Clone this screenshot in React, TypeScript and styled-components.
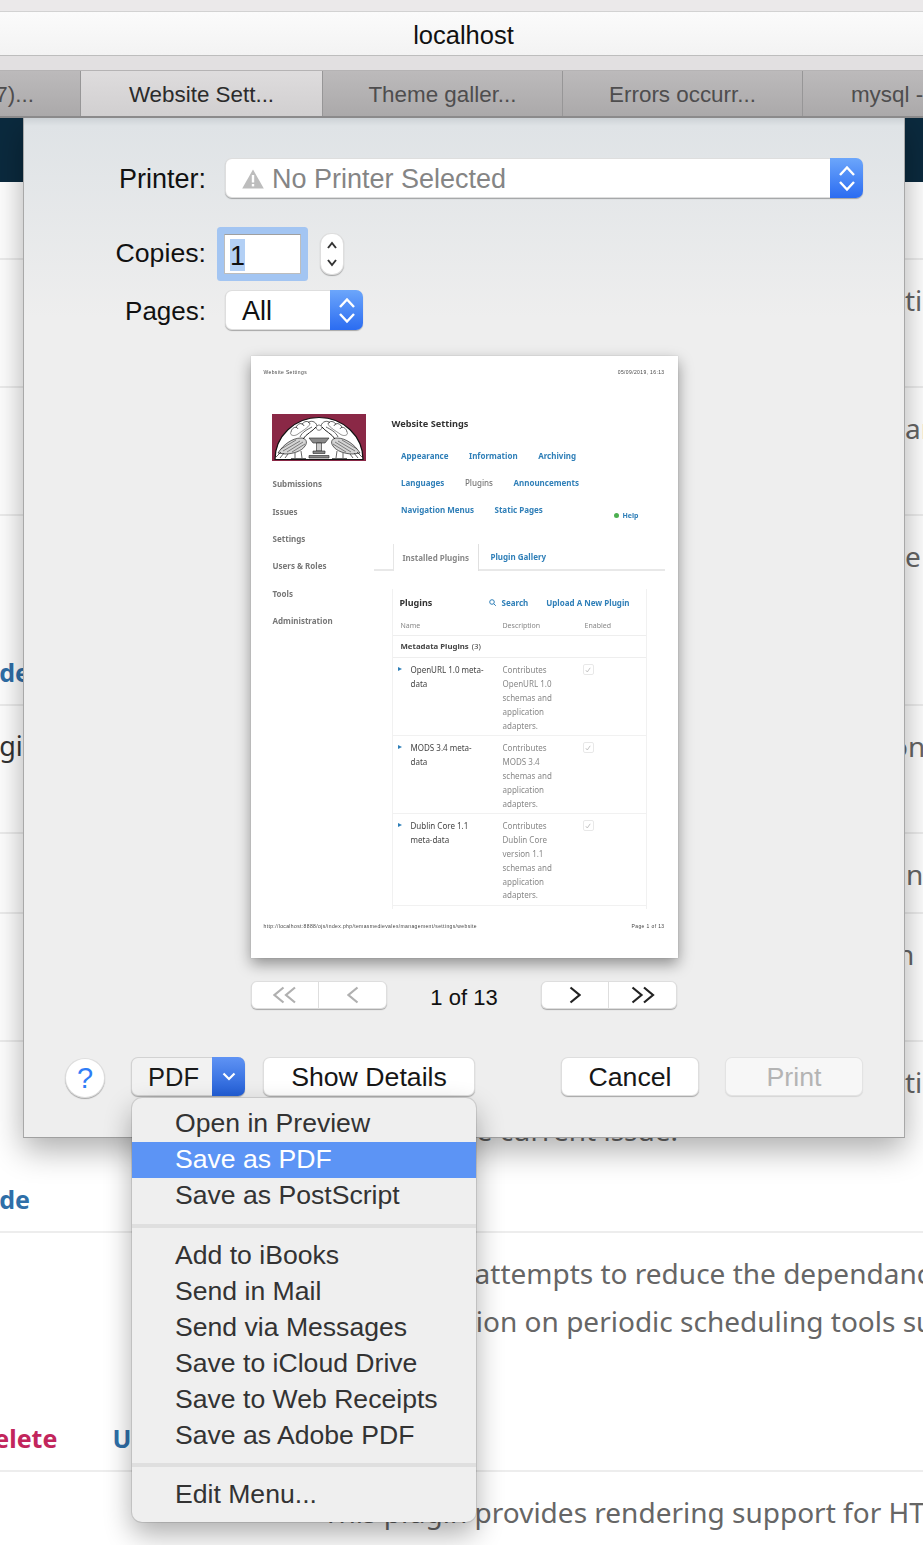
import React from "react";
import styled, { createGlobalStyle } from "styled-components";

const Global = createGlobalStyle`
  html, body { margin: 0; padding: 0; background: #fff; }
  #root { width: 923px; height: 1545px; }
`;

const SANS = `"Liberation Sans", Arial, sans-serif`;
const NOTO = `"Noto Sans", "Open Sans", sans-serif`;
const RING = "inset 0 0 0 1px rgba(0,0,0,.13), 0 1px 1px rgba(0,0,0,.3)";

const Screen = styled.div`
  width: 923px;
  height: 1545px;
  overflow: hidden;
  display: flex;
  flex-direction: column;
  font-family: ${SANS};
  background: #fff;
`;

const TopStrip = styled.div`
  height: 11px;
  background: #ebe9ea;
  border-bottom: 1px solid #d2d2d2;
`;

const AddressBar = styled.div`
  height: 44px;
  box-sizing: border-box;
  padding: 3px 0 0 4px;
  display: flex;
  align-items: center;
  justify-content: center;
  background: linear-gradient(#fbfbfb, #f3f3f3);
  border-bottom: 1px solid #bdbdbd;
  font-size: 25.5px;
  color: #111;
`;

const ChromeGap = styled.div`
  height: 14px;
  background: #e2e0e1;
`;

const TabBar = styled.div`
  height: 48px;
  box-sizing: border-box;
  display: flex;
  margin-left: -159px;
  border-top: 1px solid #b5b3b4;
  border-bottom: 2px solid #8b8a8b;
  background: #b6b4b5;
`;

const Tab = styled.div<{ $active?: boolean; $shift?: number }>`
  flex: 0 0 ${(p) => (p.$active ? 242 : 240)}px;
  box-sizing: border-box;
  display: flex;
  align-items: center;
  justify-content: center;
  padding: 2px 0 0 ${(p) => p.$shift ?? 0}px;
  white-space: nowrap;
  font-size: 22.4px;
  color: ${(p) => (p.$active ? "#2b2b2b" : "#4e4d4e")};
  border-right: 1px solid #979697;
  background: ${(p) =>
    p.$active
      ? "linear-gradient(#dedcdd, #d1cfd0)"
      : "linear-gradient(#bcbabb, #aba9aa)"};
`;

const Main = styled.div`
  position: relative;
  flex: 1;
  overflow: hidden;
`;

const Page = styled.div`
  margin-left: -200px;
  width: 1400px;
  font-family: ${NOTO};
  color: #666;
`;

const PageHeader = styled.div`
  height: 64px;
  background: #0b2a3e;
`;

const Row = styled.div<{ $h: number }>`
  height: ${(p) => p.$h}px;
  box-sizing: border-box;
  border-bottom: 2px solid #ededed;
  padding: 16px 0 14px;
  display: grid;
  grid-template-columns: 523px 1fr;
`;

const LeftCell = styled.div`
  display: flex;
  flex-direction: column;
  justify-content: space-between;
  min-height: 0;
`;

const PluginName = styled.div`
  font-size: 27px;
  line-height: 48px;
  color: #333;
  padding-left: 112px;
`;

const Actions = styled.div`
  margin-top: auto;
  display: flex;
  font-size: 25px;
  line-height: 36px;
  font-weight: 700;
`;

const ActionLink = styled.span<{ $danger?: boolean; $x: number }>`
  margin-left: ${(p) => p.$x}px;
  color: ${(p) => (p.$danger ? "#c2255c" : "#2f6fa8")};
`;

const Desc = styled.div<{ $x?: number }>`
  font-size: 28px;
  line-height: 48px;
  white-space: nowrap;
  color: #666;
  margin-left: ${(p) => p.$x ?? 0}px;
`;

/* ---- dialog ---- */
const Dialog = styled.div`
  position: absolute;
  left: 23px;
  top: 0;
  width: 882px;
  height: 1020px;
  box-sizing: border-box;
  padding-top: 40px;
  display: flex;
  flex-direction: column;
  background: linear-gradient(#cdd2d6 0, #dfe3e6 8px, #eeeeee 200px);
  border-left: 1px solid #a8a8a8;
  border-right: 1px solid #a8a8a8;
  border-bottom: 1px solid #a0a0a0;
  box-shadow: 0 12px 30px rgba(0, 0, 0, 0.32);
`;

const FormRow = styled.div<{ $gap: number }>`
  display: grid;
  grid-template-columns: 182px 1fr;
  column-gap: 19px;
  align-items: center;
  padding-right: 41px;
  margin-top: ${(p) => p.$gap}px;
  height: 40px;
`;

const Label = styled.div<{ $size: number; $nudge: number }>`
  font-size: ${(p) => p.$size}px;
  color: #111;
  text-align: right;
  margin-top: ${(p) => p.$nudge}px;
`;

const Select = styled.div<{ $w?: number; $dim?: boolean }>`
  height: 40px;
  box-sizing: border-box;
  width: ${(p) => (p.$w ? `${p.$w}px` : "100%")};
  display: flex;
  align-items: center;
  background: #fff;
  border-radius: 7px;
  overflow: hidden;
  box-shadow: ${RING};
  color: ${(p) => (p.$dim ? "#858585" : "#111")};
  font-size: 27px;
`;

const SelectValue = styled.div`
  flex: 1;
  display: flex;
  align-items: center;
  gap: 8px;
  padding: 2px 0 0 17px;
`;

const SelectArrow = styled.div`
  flex: 0 0 33px;
  align-self: stretch;
  display: flex;
  align-items: center;
  justify-content: center;
  background: linear-gradient(#6ca6fb, #2b6cf1);
`;

const CopiesWrap = styled.div`
  display: flex;
  align-items: center;
  gap: 19px;
  margin-left: -1px;
`;

const CopiesInput = styled.div`
  width: 77px;
  height: 40px;
  box-sizing: border-box;
  background: #fff;
  border: 1px solid #bdbdbd;
  border-top-color: #9f9f9f;
  box-shadow: 0 0 0 7px #a3c5f2;
  border-radius: 1px;
  padding: 4px 0 0 5px;
  font-size: 27px;
  color: #111;
`;

const Selected = styled.span`
  display: inline-block;
  width: 15px;
  height: 32px;
  line-height: 35px;
  background: #b3d0f5;
`;

const Stepper = styled.div`
  width: 24px;
  height: 42px;
  background: #fff;
  border-radius: 11px;
  box-shadow: ${RING};
  display: flex;
  align-items: center;
  justify-content: center;
`;

const Paper = styled.div`
  align-self: center;
  width: 427px;
  height: 602px;
  margin-top: 26px;
  flex: none;
  background: #fff;
  box-shadow: 0 6px 14px rgba(0, 0, 0, 0.4), 0 0 1px rgba(0, 0, 0, 0.2);
  font-family: ${NOTO};
`;

const PaperInner = styled.div`
  height: 100%;
  filter: blur(0.35px);
`;

const PaperHead = styled.div`
  height: 58px;
  box-sizing: border-box;
  padding: 13px 13px 0;
  display: flex;
  justify-content: space-between;
  font-family: ${SANS};
  font-size: 5px;
  letter-spacing: 0.38px;
  line-height: 6px;
  color: #444;
`;

const PaperBody = styled.div`
  height: 495px;
  overflow: hidden;
  display: grid;
  grid-template-columns: 102px 291px;
  padding-left: 21px;
`;

const Logo = styled.svg`
  display: block;
  width: 94px;
  height: 47px;
`;

const SideNav = styled.div`
  margin-top: 9.3px;
`;

const SideItem = styled.div`
  height: 27.4px;
  line-height: 27.4px;
  font-size: 8px;
  font-weight: 700;
  color: #777;
  padding-left: 1px;
  filter: blur(0.45px);
`;

const PaperMain = styled.div``;

const PaperTitle = styled.div`
  height: 20px;
  line-height: 20px;
  margin-left: 18px;
  font-size: 9.2px;
  font-weight: 700;
  color: #333;
`;

const NavBlock = styled.div`
  margin: 7.4px 0 20.6px 27.5px;
`;

const NavRow = styled.div`
  height: 27.3px;
  display: flex;
  align-items: center;
  gap: 20.5px;
  padding-right: 26px;
  font-size: 8px;
  font-weight: 700;
`;

const NavLink = styled.span<{ $current?: boolean }>`
  color: ${(p) => (p.$current ? "#777" : "#2f7fb8")};
  font-weight: ${(p) => (p.$current ? 500 : 700)};
  white-space: nowrap;
`;

const HelpLink = styled.span`
  margin-left: auto;
  margin-top: 11px;
  font-size: 7px;
  color: #2f7fb8;
  display: flex;
  align-items: center;
  gap: 3px;
`;

const HelpDot = styled.i`
  width: 5px;
  height: 5px;
  border-radius: 50%;
  background: #4caf50;
`;

const TabsLine = styled.div`
  height: 27px;
  box-sizing: border-box;
  display: flex;
  padding-left: 19px;
  border-bottom: 2px solid #e8e8e8;
  font-size: 8px;
  font-weight: 700;
`;

const PaperTab = styled.div`
  width: 86px;
  height: 27px;
  box-sizing: border-box;
  display: flex;
  align-items: center;
  padding-left: 9px;
  background: #fff;
  border-left: 1px solid #e6e6e6;
  border-right: 1px solid #e0e0e0;
  color: #888;
  font-weight: 700;
  white-space: nowrap;
`;

const PaperTabLink = styled.div`
  height: 25px;
  display: flex;
  align-items: center;
  margin-left: 12px;
  color: #2f7fb8;
`;

const Panel = styled.div`
  margin: 18px 0 0 18px;
  width: 255px;
  height: 400px;
  box-sizing: border-box;
  border-left: 1px solid #f1f1f1;
  border-right: 1px solid #f1f1f1;
`;

const PanelHead = styled.div`
  height: 28px;
  display: flex;
  align-items: center;
  padding: 0 16px 0 7px;
  font-size: 8px;
  font-weight: 700;
  color: #2f7fb8;
`;

const PanelTitle = styled.span`
  font-size: 9px;
  color: #333;
  margin-right: auto;
`;

const SearchLink = styled.span`
  display: flex;
  align-items: center;
  gap: 5px;
  margin-right: 18px;
`;

const Columns = styled.div`
  display: grid;
  grid-template-columns: 110px 82px 1fr;
  height: 18px;
  align-items: center;
  border-bottom: 1px solid #eee;
  font-size: 7px;
  color: #888;
`;

const ColName = styled.span`
  padding-left: 8px;
`;

const GroupRow = styled.div`
  height: 22px;
  box-sizing: border-box;
  display: flex;
  align-items: center;
  padding-left: 8px;
  border-bottom: 1px solid #eee;
  font-size: 7.8px;
  color: #444;
  font-weight: 700;
`;

const GroupCount = styled.span`
  font-weight: 400;
  margin-left: 3px;
`;

const PluginRow = styled.div`
  display: grid;
  grid-template-columns: 110px 82px 1fr;
  padding: 5.5px 0 2.5px;
  border-bottom: 1px solid #f1f1f1;
  font-size: 8px;
  line-height: 13.8px;
`;

const PluginTitle = styled.div`
  display: flex;
  gap: 9px;
  padding-left: 5px;
  color: #444;
`;

const Triangle = styled.i`
  flex: none;
  width: 0;
  height: 0;
  margin-top: 4px;
  border-left: 4px solid #2f7fb8;
  border-top: 2.5px solid transparent;
  border-bottom: 2.5px solid transparent;
`;

const PluginDesc = styled.div`
  color: #888;
`;

const Check = styled.div`
  width: 9px;
  height: 9px;
  margin: 1px 0 0 -2px;
  border: 1px solid #e8e8e8;
  border-radius: 2px;
  display: flex;
  align-items: center;
  justify-content: center;
`;

const PaperFoot = styled.div`
  padding: 14px 13px 0;
  display: flex;
  justify-content: space-between;
  font-family: ${SANS};
  font-size: 5px;
  letter-spacing: 0.38px;
  line-height: 6px;
  color: #444;
`;

const Pager = styled.div`
  align-self: center;
  width: 426px;
  margin-top: 23px;
  height: 28px;
  flex: none;
  display: flex;
  align-items: center;
  justify-content: space-between;
`;

const Segmented = styled.div`
  width: 136px;
  height: 28px;
  display: grid;
  grid-template-columns: 68px 68px;
  background: #fff;
  border-radius: 6px;
  box-shadow: ${RING};
`;

const Segment = styled.div<{ $sep?: boolean }>`
  display: flex;
  align-items: center;
  justify-content: center;
  border-right: ${(p) => (p.$sep ? "1px solid #dedede" : "none")};
`;

const PageCount = styled.div`
  font-size: 22px;
  color: #111;
  padding-top: 5px;
`;

const BottomBar = styled.div`
  margin-top: 48px;
  height: 40px;
  display: flex;
  align-items: flex-start;
  padding: 0 41px;
  flex: none;
`;

const HelpButton = styled.div`
  width: 40px;
  height: 40px;
  flex: none;
  margin: 1px 26px 0 0;
  border-radius: 50%;
  background: #fff;
  box-shadow: ${RING};
  color: #2f7df6;
  font-size: 29px;
  display: flex;
  align-items: center;
  justify-content: center;
`;

const PdfWrap = styled.div`
  position: relative;
  margin-right: 18px;
`;

const PdfButton = styled.div`
  width: 114px;
  height: 39px;
  display: flex;
  border-radius: 7px;
  overflow: hidden;
  background: #f2f2f2;
  box-shadow: ${RING};
  font-size: 25.5px;
  color: #1a1a1a;
`;

const PdfLabel = styled.div`
  flex: 1;
  display: flex;
  align-items: center;
  padding: 1px 0 0 17px;
`;

const PdfArrow = styled.div`
  flex: 0 0 33px;
  display: flex;
  align-items: center;
  justify-content: center;
  background: linear-gradient(#5f93f4, #225ed6);
`;

const PushButton = styled.div<{ $w: number; $push?: boolean; $disabled?: boolean }>`
  width: ${(p) => p.$w}px;
  height: 39px;
  box-sizing: border-box;
  padding-top: 2px;
  margin-left: ${(p) => (p.$push ? "auto" : "0")};
  display: flex;
  align-items: center;
  justify-content: center;
  border-radius: 7px;
  background: ${(p) => (p.$disabled ? "#f7f7f7" : "#fff")};
  color: ${(p) => (p.$disabled ? "#b4b4b4" : "#161616")};
  box-shadow: ${(p) =>
    p.$disabled
      ? "inset 0 0 0 1px rgba(0,0,0,.08), 0 1px 1px rgba(0,0,0,.1)"
      : RING};
  font-size: 26.7px;
  flex: none;
`;

const Spacer = styled.div<{ $w: number }>`
  flex: 0 0 ${(p) => p.$w}px;
`;

const Menu = styled.div`
  position: absolute;
  left: 1px;
  top: 41px;
  width: 344px;
  height: 424px;
  box-sizing: border-box;
  padding-top: 8px;
  background: #efefef;
  border-radius: 10px;
  box-shadow: 0 12px 28px rgba(0, 0, 0, 0.32), 0 0 0 1px rgba(0, 0, 0, 0.1);
  z-index: 2;
`;

const MenuItem = styled.div<{ $active?: boolean; $lift?: boolean }>`
  height: 36px;
  box-sizing: border-box;
  display: flex;
  align-items: center;
  padding: 0 0 ${(p) => (p.$lift ? 2 : 0)}px 43px;
  font-size: 26.6px;
  color: ${(p) => (p.$active ? "#fff" : "#333")};
  background: ${(p) => (p.$active ? "#5c94f5" : "transparent")};
  white-space: nowrap;
`;

const MenuSep = styled.div`
  height: 4px;
  background: #dfdfdf;
  margin: 10px 0 9px;
`;

/* ---- drawings ---- */
const UpDown = ({ c = "#fff", w = 20 }: { c?: string; w?: number }) => (
  <svg width={w} height={w * 1.45} viewBox="0 0 20 29" fill="none" stroke={c} strokeWidth="2.4">
    <path d="M3 11 L10 3.5 L17 11" />
    <path d="M3 18 L10 25.5 L17 18" />
  </svg>
);

const SmallUpDown = () => (
  <svg width="12" height="28" viewBox="0 0 12 28" fill="none" stroke="#333" strokeWidth="2">
    <path d="M2 8 L6 3 L10 8" />
    <path d="M2 20 L6 25 L10 20" />
  </svg>
);

const Warning = () => (
  <svg width="22" height="20" viewBox="0 0 22 20">
    <path d="M11 0.5 L21.8 19.5 H0.2 Z" fill="#bdbdbd" />
    <rect x="9.8" y="6" width="2.4" height="7.5" fill="#fff" />
    <rect x="9.8" y="15" width="2.4" height="2.4" fill="#fff" />
  </svg>
);

const Chev = ({ dir, double, c }: { dir: "l" | "r"; double?: boolean; c: string }) => (
  <svg
    width={double ? 24 : 12}
    height="18"
    viewBox={double ? "0 0 24 18" : "0 0 12 18"}
    fill="none"
    stroke={c}
    strokeWidth="2.2"
  >
    {dir === "r" ? (
      <>
        <path d="M1.5 1.5 L10.5 9 L1.5 16.5" />
        {double && <path d="M13 1.5 L22 9 L13 16.5" />}
      </>
    ) : (
      <>
        <path d="M10.5 1.5 L1.5 9 L10.5 16.5" />
        {double && <path d="M22 1.5 L13 9 L22 16.5" />}
      </>
    )}
  </svg>
);

const Bird = () => (
  <g fill="none" stroke="#222" strokeWidth="0.7">
    <path d="M6 39 C11 31 20 24 29 24 C34 24 36 28 33 32 C30 37 21 40 13 40 Z" fill="#d4d4d4" />
    <path d="M11 37 L28 27 M15 38 L31 28 M20 38 L33 30 M9 35 L24 26" strokeWidth="0.5" />
    <path d="M31 25 C34 20 41 17 44 13" strokeWidth="1" />
    <path d="M28 23 C30 18 36 15 40 13" />
    <path d="M19 18 C20 13 25 12 26 15 M24 14 C25 9 31 8 32 12 M30 11 C31 7 37 6 38 10 M36 9 C38 6 44 7 45 12" />
    <path d="M19 18 C17 21 22 23 26 20 C30 17 36 14 38 10" strokeWidth="0.5" />
    <path d="M23 39 L23 44 M29 37 L30 44 M19 44.5 H34" />
    <path d="M9 38 L4 43 M12 39 L8 44 M16 40 L13 44" />
  </g>
);

const LogoArt = () => (
  <Logo viewBox="0 0 94 47">
    <rect width="94" height="47" fill="#8a2846" />
    <path d="M3 45.5 A44 42 0 0 1 91 45.5 Z" fill="#fff" stroke="#111" strokeWidth="1.2" />
    <Bird />
    <g transform="translate(94 0) scale(-1 1)">
      <Bird />
    </g>
    <g fill="#8a8a8a" stroke="#222" strokeWidth="0.6">
      <path d="M37 24 H57 L53 29 H41 Z" />
      <path d="M44.5 29 H49.5 V37 H44.5 Z" fill="#ccc" />
      <path d="M41 37 H53 V39.5 H41 Z M37 41.5 H57 V44 H37 Z" />
      <path d="M44 14 C45 10 49 10 50 14 C49 17 45 17 44 14 Z" fill="#fff" />
    </g>
  </Logo>
);

const plugins = [
  { name: ["OpenURL 1.0 meta-", "data"], desc: ["Contributes", "OpenURL 1.0", "schemas and", "application", "adapters."] },
  { name: ["MODS 3.4 meta-", "data"], desc: ["Contributes", "MODS 3.4", "schemas and", "application", "adapters."] },
  { name: ["Dublin Core 1.1", "meta-data"], desc: ["Contributes", "Dublin Core", "version 1.1", "schemas and", "application", "adapters."] },
];

const Lines = ({ lines }: { lines: string[] }) => (
  <>
    {lines.map((l, i) => (
      <div key={i}>{l}</div>
    ))}
  </>
);

export default function App() {
  return (
    <Screen>
      <Global />
      <TopStrip />
      <AddressBar>localhost</AddressBar>
      <ChromeGap />
      <TabBar>
        <Tab $shift={10}>Journals (7)...</Tab>
        <Tab $active>Website Sett...</Tab>
        <Tab>Theme galler...</Tab>
        <Tab>Errors occurr...</Tab>
        <Tab>mysql - local...</Tab>
      </TabBar>
      <Main>
        <Page>
          <PageHeader />
          <Row $h={78} />
          <Row $h={128}>
            <LeftCell />
            <Desc $x={582}>ti</Desc>
          </Row>
          <Row $h={128}>
            <LeftCell />
            <Desc $x={582}>ar</Desc>
          </Row>
          <Row $h={190}>
            <LeftCell>
              <Actions>
                <ActionLink $x={123}>Upgrade</ActionLink>
              </Actions>
            </LeftCell>
            <Desc $x={582}>e</Desc>
          </Row>
          <Row $h={128}>
            <LeftCell>
              <PluginName>Plugin gi</PluginName>
            </LeftCell>
            <Desc $x={568}>on</Desc>
          </Row>
          <Row $h={80}>
            <LeftCell />
            <Desc $x={583}>n</Desc>
          </Row>
          <Row $h={128}>
            <LeftCell />
            <Desc $x={574}>n</Desc>
          </Row>
          <Row $h={191}>
            <LeftCell>
              <Actions>
                <ActionLink $x={123}>Upgrade</ActionLink>
              </Actions>
            </LeftCell>
            <div>
              <Desc $x={582}>ti</Desc>
              <Desc $x={6}>article in the current issue.</Desc>
            </div>
          </Row>
          <Row $h={239}>
            <LeftCell>
              <Actions>
                <ActionLink $danger $x={176}>Delete</ActionLink>
                <ActionLink $x={55}>Upgrade</ActionLink>
              </Actions>
            </LeftCell>
            <div>
              <Desc>This plugin attempts to reduce the dependance</Desc>
              <Desc $x={-6}>a configuration on periodic scheduling tools such as cron.</Desc>
            </div>
          </Row>
          <Row $h={120}>
            <LeftCell />
            <Desc>This plugin provides rendering support for HTML</Desc>
          </Row>
        </Page>

        <Dialog>
          <FormRow $gap={0}>
            <Label $size={27} $nudge={2}>Printer:</Label>
            <Select $dim>
              <SelectValue>
                <Warning />
                No Printer Selected
              </SelectValue>
              <SelectArrow>
                <UpDown />
              </SelectArrow>
            </Select>
          </FormRow>
          <FormRow $gap={35}>
            <Label $size={26.7} $nudge={-2}>Copies:</Label>
            <CopiesWrap>
              <CopiesInput>
                <Selected>1</Selected>
              </CopiesInput>
              <Stepper>
                <SmallUpDown />
              </Stepper>
            </CopiesWrap>
          </FormRow>
          <FormRow $gap={17}>
            <Label $size={26} $nudge={2}>Pages:</Label>
            <Select $w={138}>
              <SelectValue>All</SelectValue>
              <SelectArrow>
                <UpDown />
              </SelectArrow>
            </Select>
          </FormRow>

          <Paper>
            <PaperInner>
              <PaperHead>
                <span>Website Settings</span>
                <span>05/09/2019, 16:13</span>
              </PaperHead>
              <PaperBody>
                <div>
                  <LogoArt />
                  <SideNav>
                    {["Submissions", "Issues", "Settings", "Users & Roles", "Tools", "Administration"].map((s) => (
                      <SideItem key={s}>{s}</SideItem>
                    ))}
                  </SideNav>
                </div>
                <PaperMain>
                  <PaperTitle>Website Settings</PaperTitle>
                  <NavBlock>
                    <NavRow>
                      <NavLink>Appearance</NavLink>
                      <NavLink>Information</NavLink>
                      <NavLink>Archiving</NavLink>
                    </NavRow>
                    <NavRow>
                      <NavLink>Languages</NavLink>
                      <NavLink $current>Plugins</NavLink>
                      <NavLink>Announcements</NavLink>
                    </NavRow>
                    <NavRow>
                      <NavLink>Navigation Menus</NavLink>
                      <NavLink>Static Pages</NavLink>
                      <HelpLink>
                        <HelpDot />
                        Help
                      </HelpLink>
                    </NavRow>
                  </NavBlock>
                  <TabsLine>
                    <PaperTab>Installed Plugins</PaperTab>
                    <PaperTabLink>Plugin Gallery</PaperTabLink>
                  </TabsLine>
                  <Panel>
                    <PanelHead>
                      <PanelTitle>Plugins</PanelTitle>
                      <SearchLink>
                        <svg width="7" height="7" viewBox="0 0 7 7" fill="none" stroke="#2f7fb8" strokeWidth="1">
                          <circle cx="3" cy="3" r="2.3" />
                          <path d="M4.7 4.7 L6.8 6.8" />
                        </svg>
                        Search
                      </SearchLink>
                      <span>Upload A New Plugin</span>
                    </PanelHead>
                    <Columns>
                      <ColName>Name</ColName>
                      <span>Description</span>
                      <span>Enabled</span>
                    </Columns>
                    <GroupRow>
                      Metadata Plugins<GroupCount>(3)</GroupCount>
                    </GroupRow>
                    {plugins.map((p) => (
                      <PluginRow key={p.name[0]}>
                        <PluginTitle>
                          <Triangle />
                          <div>
                            <Lines lines={p.name} />
                          </div>
                        </PluginTitle>
                        <PluginDesc>
                          <Lines lines={p.desc} />
                        </PluginDesc>
                        <Check>
                          <svg width="6" height="6" viewBox="0 0 6 6" fill="none" stroke="#b5b5b5" strokeWidth="0.8">
                            <path d="M0.8 3.2 L2.3 5 L5.2 0.8" />
                          </svg>
                        </Check>
                      </PluginRow>
                    ))}
                  </Panel>
                </PaperMain>
              </PaperBody>
              <PaperFoot>
                <span>http://localhost:8888/ojs/index.php/temasmedievales/management/settings/website</span>
                <span>Page 1 of 13</span>
              </PaperFoot>
            </PaperInner>
          </Paper>

          <Pager>
            <Segmented>
              <Segment $sep>
                <Chev dir="l" double c="#b0b0b0" />
              </Segment>
              <Segment>
                <Chev dir="l" c="#b0b0b0" />
              </Segment>
            </Segmented>
            <PageCount>1 of 13</PageCount>
            <Segmented>
              <Segment $sep>
                <Chev dir="r" c="#222" />
              </Segment>
              <Segment>
                <Chev dir="r" double c="#222" />
              </Segment>
            </Segmented>
          </Pager>

          <BottomBar>
            <HelpButton>?</HelpButton>
            <PdfWrap>
              <PdfButton>
                <PdfLabel>PDF</PdfLabel>
                <PdfArrow>
                  <svg width="14" height="9" viewBox="0 0 14 9" fill="none" stroke="#fff" strokeWidth="2.2">
                    <path d="M1.5 1.5 L7 7 L12.5 1.5" />
                  </svg>
                </PdfArrow>
              </PdfButton>
              <Menu>
                <MenuItem $lift>Open in Preview</MenuItem>
                <MenuItem $lift $active>Save as PDF</MenuItem>
                <MenuItem $lift>Save as PostScript</MenuItem>
                <MenuSep />
                <MenuItem>Add to iBooks</MenuItem>
                <MenuItem>Send in Mail</MenuItem>
                <MenuItem>Send via Messages</MenuItem>
                <MenuItem>Save to iCloud Drive</MenuItem>
                <MenuItem>Save to Web Receipts</MenuItem>
                <MenuItem>Save as Adobe PDF</MenuItem>
                <MenuSep />
                <MenuItem>Edit Menu...</MenuItem>
              </Menu>
            </PdfWrap>
            <PushButton $w={212}>Show Details</PushButton>
            <PushButton $w={138} $push>Cancel</PushButton>
            <Spacer $w={26} />
            <PushButton $w={138} $disabled>Print</PushButton>
          </BottomBar>
        </Dialog>
      </Main>
    </Screen>
  );
}
